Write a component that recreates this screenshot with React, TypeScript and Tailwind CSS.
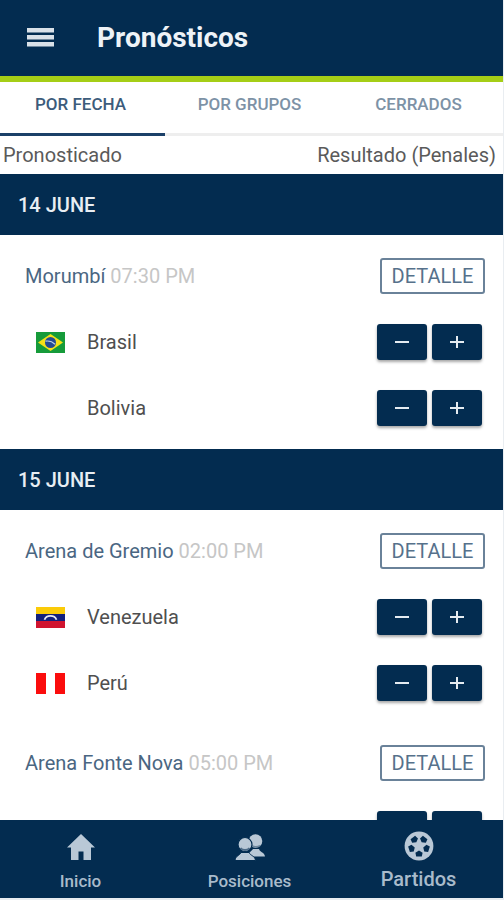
import { useState } from "react";

type Flag = "brasil" | "venezuela" | "peru";
type Team = { name?: string; flag?: Flag };
type Match = { venue: string; time: string; teams: Team[] };
type Day = { date: string; matches: Match[] };

const days: Day[] = [
  {
    date: "14 JUNE",
    matches: [
      { venue: "Morumbí", time: "07:30 PM", teams: [{ name: "Brasil", flag: "brasil" }, { name: "Bolivia" }] },
    ],
  },
  {
    date: "15 JUNE",
    matches: [
      {
        venue: "Arena de Gremio",
        time: "02:00 PM",
        teams: [
          { name: "Venezuela", flag: "venezuela" },
          { name: "Perú", flag: "peru" },
        ],
      },
      { venue: "Arena Fonte Nova", time: "05:00 PM", teams: [{}] },
    ],
  },
];

function FlagIcon({ flag }: { flag?: Flag }) {
  if (!flag) return <span className="w-[29px]" />;
  return (
    <svg viewBox="0 0 29 21" className="h-[21px] w-[29px]" aria-hidden="true">
      {flag === "brasil" && (
        <>
          <path fill="#169b3a" d="M0 0h29v21H0z" />
          <path fill="#f5e017" d="M14.5 2 27 10.5 14.5 19 2 10.5z" />
          <circle cx="14.5" cy="10.5" r="5.5" fill="#244a93" />
          <path d="M9.500 9.200c3.500-.6 7 .6 9.500 3" fill="none" stroke="#b9cbe4" strokeWidth="1.200" />
        </>
      )}
      {flag === "venezuela" && (
        <>
          <path fill="#fbcb08" d="M0 0h29v7H0z" />
          <path fill="#12207c" d="M0 7h29v7H0z" />
          <path fill="#d0142f" d="M0 14h29v7H0z" />
          <path d="M8.500 12.800c2-5.200 10-5.200 12 0" fill="none" stroke="#e6e9f5" strokeWidth="1.800" />
        </>
      )}
      {flag === "peru" && (
        <>
          <path fill="#fff" d="M0 0h29v21H0z" />
          <path fill="#fb0d0d" d="M0 0h10v21H0zM19 0h10v21H19z" />
        </>
      )}
    </svg>
  );
}

function StepButton({ kind, team }: { kind: "menos" | "más"; team?: string }) {
  return (
    <button
      type="button"
      aria-label={team ? `${kind} ${team}` : kind}
      className="flex h-9 w-[50px] items-center justify-center rounded-[3px] bg-[#032c50] shadow-[0_2px_3px_rgba(0,0,0,0.35)]"
    >
      <svg viewBox="0 0 16 16" className="size-4" fill="none" stroke="#e4ebf1" strokeWidth="2" aria-hidden="true">
        <path d="M1 8h14" />
        {kind === "más" && <path d="M8 2v12" />}
      </svg>
    </button>
  );
}

function TeamRow({ team }: { team: Team }) {
  return (
    <li className="flex h-[66px] items-center pr-[21px] pl-9">
      <FlagIcon flag={team.flag} />
      <span className="ml-[22px] flex-1 text-[20px] leading-6 text-[#4f4f4f]">{team.name}</span>
      <div className="flex gap-[5px]">
        <StepButton kind="menos" team={team.name} />
        <StepButton kind="más" team={team.name} />
      </div>
    </li>
  );
}

function MatchCard({ match }: { match: Match }) {
  return (
    <article className="pt-2 pb-[6px]">
      <div className="flex h-[66px] items-center justify-between pr-[18px] pl-[25px]">
        <h3 className="text-[20px] leading-6 text-[#4a6682]">
          {match.venue} <time className="text-[#c6c6c6]">{match.time}</time>
        </h3>
        <button
          type="button"
          className="h-9 w-[105px] rounded-[3px] border-2 border-[#6a8299] text-[20px] leading-6 text-[#56718b]"
        >
          DETALLE
        </button>
      </div>
      <ul>
        {match.teams.map((team, i) => (
          <TeamRow key={i} team={team} />
        ))}
      </ul>
    </article>
  );
}

function HomeIcon() {
  return (
    <svg viewBox="0 0 30 30" className="size-[30px]" fill="#b9c8d6" aria-hidden="true">
      <path d="M15 2 29 15.500H25V28H17.500V19.500H12.500V28H5V15.500H1z" />
    </svg>
  );
}

function PeopleIcon() {
  return (
    <svg viewBox="0 0 30 30" className="size-[30px]" fill="#b9c8d6" aria-hidden="true">
      <circle cx="20.500" cy="9" r="6.800" />
      <path d="M13 24.500c.5-4.500 3.500-5 5-7.500h6c1 3.500 5.500 3 6 7.500z" />
      <path d="M17 13.500c1.500 1.800 6 1.800 8 0" fill="none" stroke="#6d879e" strokeWidth="1.500" />
      <circle cx="10" cy="12.500" r="7" stroke="#032c50" strokeWidth="1.200" />
      <path d="M0 28.500c.5-5 4.500-4.500 6-8h8c1.500 3.500 6 3 6.500 8z" stroke="#032c50" strokeWidth="1" />
      <path d="M5.500 16c2 2.600 7 2.600 9 0" fill="none" stroke="#4d6b87" strokeWidth="2" />
    </svg>
  );
}

function BallIcon() {
  return (
    <svg viewBox="0 0 30 30" className="size-[30px]" aria-hidden="true">
      <circle cx="15" cy="15" r="14.400" fill="#b9c8d6" />
      <g fill="#032c50">
        {[0, 72, 144, 216, 288].map((a) => (
          <path
            key={a}
            d="M15 19.500 18.600 21.700 17.800 25.500H12.200L11.400 21.700z"
            transform={`rotate(${a} 15 15)`}
          />
        ))}
      </g>
    </svg>
  );
}

const tabs = ["POR FECHA", "POR GRUPOS", "CERRADOS"];

export default function App() {
  const [active, setActive] = useState(0);
  return (
    <div className="h-screen overflow-hidden bg-[#e9edf1] pr-px pb-[2px] font-['Roboto',sans-serif]">
      <div className="flex h-full flex-col overflow-hidden bg-white">
        <header className="flex h-[82px] shrink-0 items-center border-b-[6px] border-[#a5ce16] bg-[#032c50] pl-[27px]">
          <button type="button" aria-label="Menú">
            <svg viewBox="0 0 27 20" className="h-5 w-[27px]" fill="#d9e1e8" aria-hidden="true">
              <path d="M0 0h27v4.500H0zM0 7h27v4.500H0zM0 14h27v4.500H0z" />
            </svg>
          </button>
          <h1 className="ml-[43px] text-[28px] leading-8 font-bold text-[#eef3f7]">Pronósticos</h1>
        </header>

        <div role="tablist" className="-ml-1 grid shrink-0 grid-cols-3">
          {tabs.map((tab, i) => (
            <button
              key={tab}
              type="button"
              role="tab"
              aria-selected={i === active}
              onClick={() => setActive(i)}
              className={`h-[54px] border-b-[3px] pb-2 text-[17px] leading-6 font-medium ${
                i === active ? "border-[#1b4068] text-[#3c5c7b]" : "border-[#eeeeee] text-[#7d92a6]"
              }`}
            >
              {tab}
            </button>
          ))}
        </div>

        <div className="flex h-[38px] shrink-0 items-center justify-between pr-[7px] pl-[3px] text-[20px] leading-6 text-[#5a5a5a]">
          <span>Pronosticado</span>
          <span>Resultado (Penales)</span>
        </div>

        <main className="min-h-0 flex-1 overflow-y-auto [scrollbar-width:none]">
          {days.map((day) => (
            <section key={day.date} className="pb-[2px]">
              <h2 className="flex h-[61px] items-center bg-[#032c50] pl-[18px] text-[20px] leading-6 font-medium text-[#e8eef3]">
                {day.date}
              </h2>
              {day.matches.map((match) => (
                <MatchCard key={match.venue} match={match} />
              ))}
            </section>
          ))}
        </main>

        <nav className="-ml-1 grid h-[78px] shrink-0 grid-cols-3 bg-[#032c50] font-medium text-[#a9bbcb]">
          <a href="#inicio" className="flex flex-col items-center pt-3">
            <HomeIcon />
            <span className="mt-[7px] text-[17px] leading-6">Inicio</span>
          </a>
          <a href="#posiciones" className="flex flex-col items-center pt-3">
            <PeopleIcon />
            <span className="mt-[7px] text-[17px] leading-6">Posiciones</span>
          </a>
          <a href="#partidos" className="flex flex-col items-center pt-[11px]">
            <BallIcon />
            <span className="mt-[6px] text-[20px] leading-6">Partidos</span>
          </a>
        </nav>
      </div>
    </div>
  );
}
